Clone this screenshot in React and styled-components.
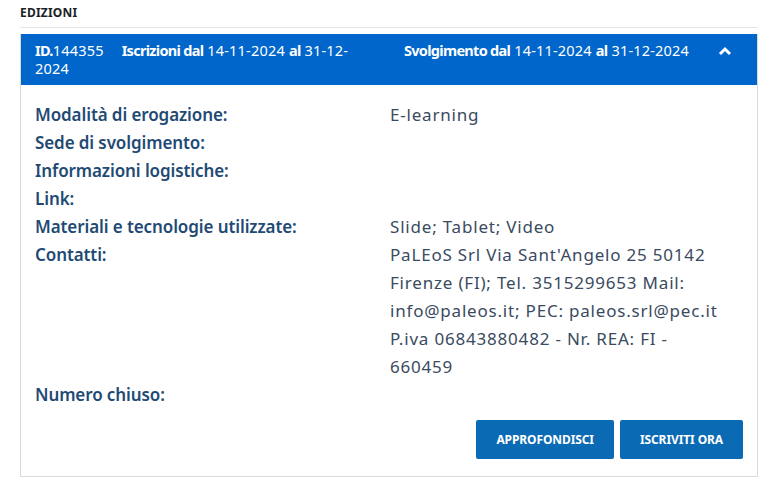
import React from "react";
import styled, { createGlobalStyle } from "styled-components";

const GlobalStyle = createGlobalStyle`
  body {
    margin: 0;
    background: #fff;
    font-family: "Noto Sans", "Open Sans", sans-serif;
  }
`;

const rows = [
  { label: "Modalità di erogazione:", value: "E-learning" },
  { label: "Sede di svolgimento:", value: "" },
  { label: "Informazioni logistiche:", value: "" },
  { label: "Link:", value: "" },
  { label: "Materiali e tecnologie utilizzate:", value: "Slide; Tablet; Video" },
  {
    label: "Contatti:",
    value:
      "PaLEoS Srl Via Sant'Angelo 25 50142 Firenze (FI); Tel. 3515299653 Mail: info@paleos.it; PEC: paleos.srl@pec.it P.iva 06843880482 - Nr. REA: FI - 660459",
  },
  { label: "Numero chiuso:", value: "" },
];

function App() {
  return (
    <Page>
      <GlobalStyle />
      <Title>EDIZIONI</Title>
      <Card>
        <Header>
          <HeaderCell $gap={28}>
            <Id>
              <b>ID.</b>144355
            </Id>
            <b>Iscrizioni dal</b> 14-11-2024 <b>al</b> 31-12-2024
          </HeaderCell>
          <HeaderCell $gap={0}>
            <b>Svolgimento dal</b> 14-11-2024 <b>al</b> 31-12-2024
          </HeaderCell>
          <Chevron viewBox="0 0 14 10" width="14" height="10">
            <path d="M2 8 L7 3 L12 8" fill="none" stroke="#fff" strokeWidth="3" />
          </Chevron>
        </Header>
        <Body>
          <Details>
            {rows.map((r) => (
              <React.Fragment key={r.label}>
                <Label>{r.label}</Label>
                <Value>{r.value}</Value>
              </React.Fragment>
            ))}
          </Details>
          <Actions>
            <Button>Approfondisci</Button>
            <Button>Iscriviti ora</Button>
          </Actions>
        </Body>
      </Card>
    </Page>
  );
}

const Page = styled.div`
  width: 738px;
  padding: 5px 20px 14px 20px;
`;

const Title = styled.h3`
  margin: 0;
  font-size: 12px;
  line-height: 16px;
  font-weight: 700;
  color: #1c2227;
  letter-spacing: 0.2px;
  padding-bottom: 6px;
  border-bottom: 1px solid #e3e4e6;
  margin-bottom: 6px;
`;

const Card = styled.div`
  border: 1px solid #d9dadc;
  border-top: none;
`;

const Header = styled.div`
  display: grid;
  grid-template-columns: 369px 314px 1fr;
  align-items: start;
  background: #0066cc;
  color: #fff;
  padding: 7px 0 8px 14px;
  font-size: 14.5px;
  line-height: 18px;
  letter-spacing: 0.2px;
  min-height: 36px;

  b {
    font-weight: 700;
    letter-spacing: -0.7px;
  }
`;

const HeaderCell = styled.div`
  padding-right: ${(p) => p.$gap}px;
  white-space: normal;
`;

const Id = styled.span`
  margin-right: 18px;
`;

const Chevron = styled.svg`
  margin-top: 5px;
`;

const Body = styled.div`
  padding: 16px 14px 17px 14px;
`;

const Details = styled.div`
  display: grid;
  grid-template-columns: 355px 340px;
  font-size: 17px;
  line-height: 28px;
`;

const Label = styled.div`
  color: #1f4a74;
  font-weight: 600;
  letter-spacing: -0.1px;
`;

const Value = styled.div`
  color: #3a4a60;
  letter-spacing: 0.8px;
`;

const Actions = styled.div`
  display: flex;
  justify-content: flex-end;
  gap: 6px;
  margin-top: 11px;
`;

const Button = styled.button`
  background: #0b6ab4;
  color: #fff;
  border: none;
  border-radius: 2px;
  height: 39px;
  padding: 0 20px;
  font-family: "Noto Sans", sans-serif;
  font-size: 12px;
  font-weight: 700;
  text-transform: uppercase;
  letter-spacing: -0.1px;
`;

export default App;
